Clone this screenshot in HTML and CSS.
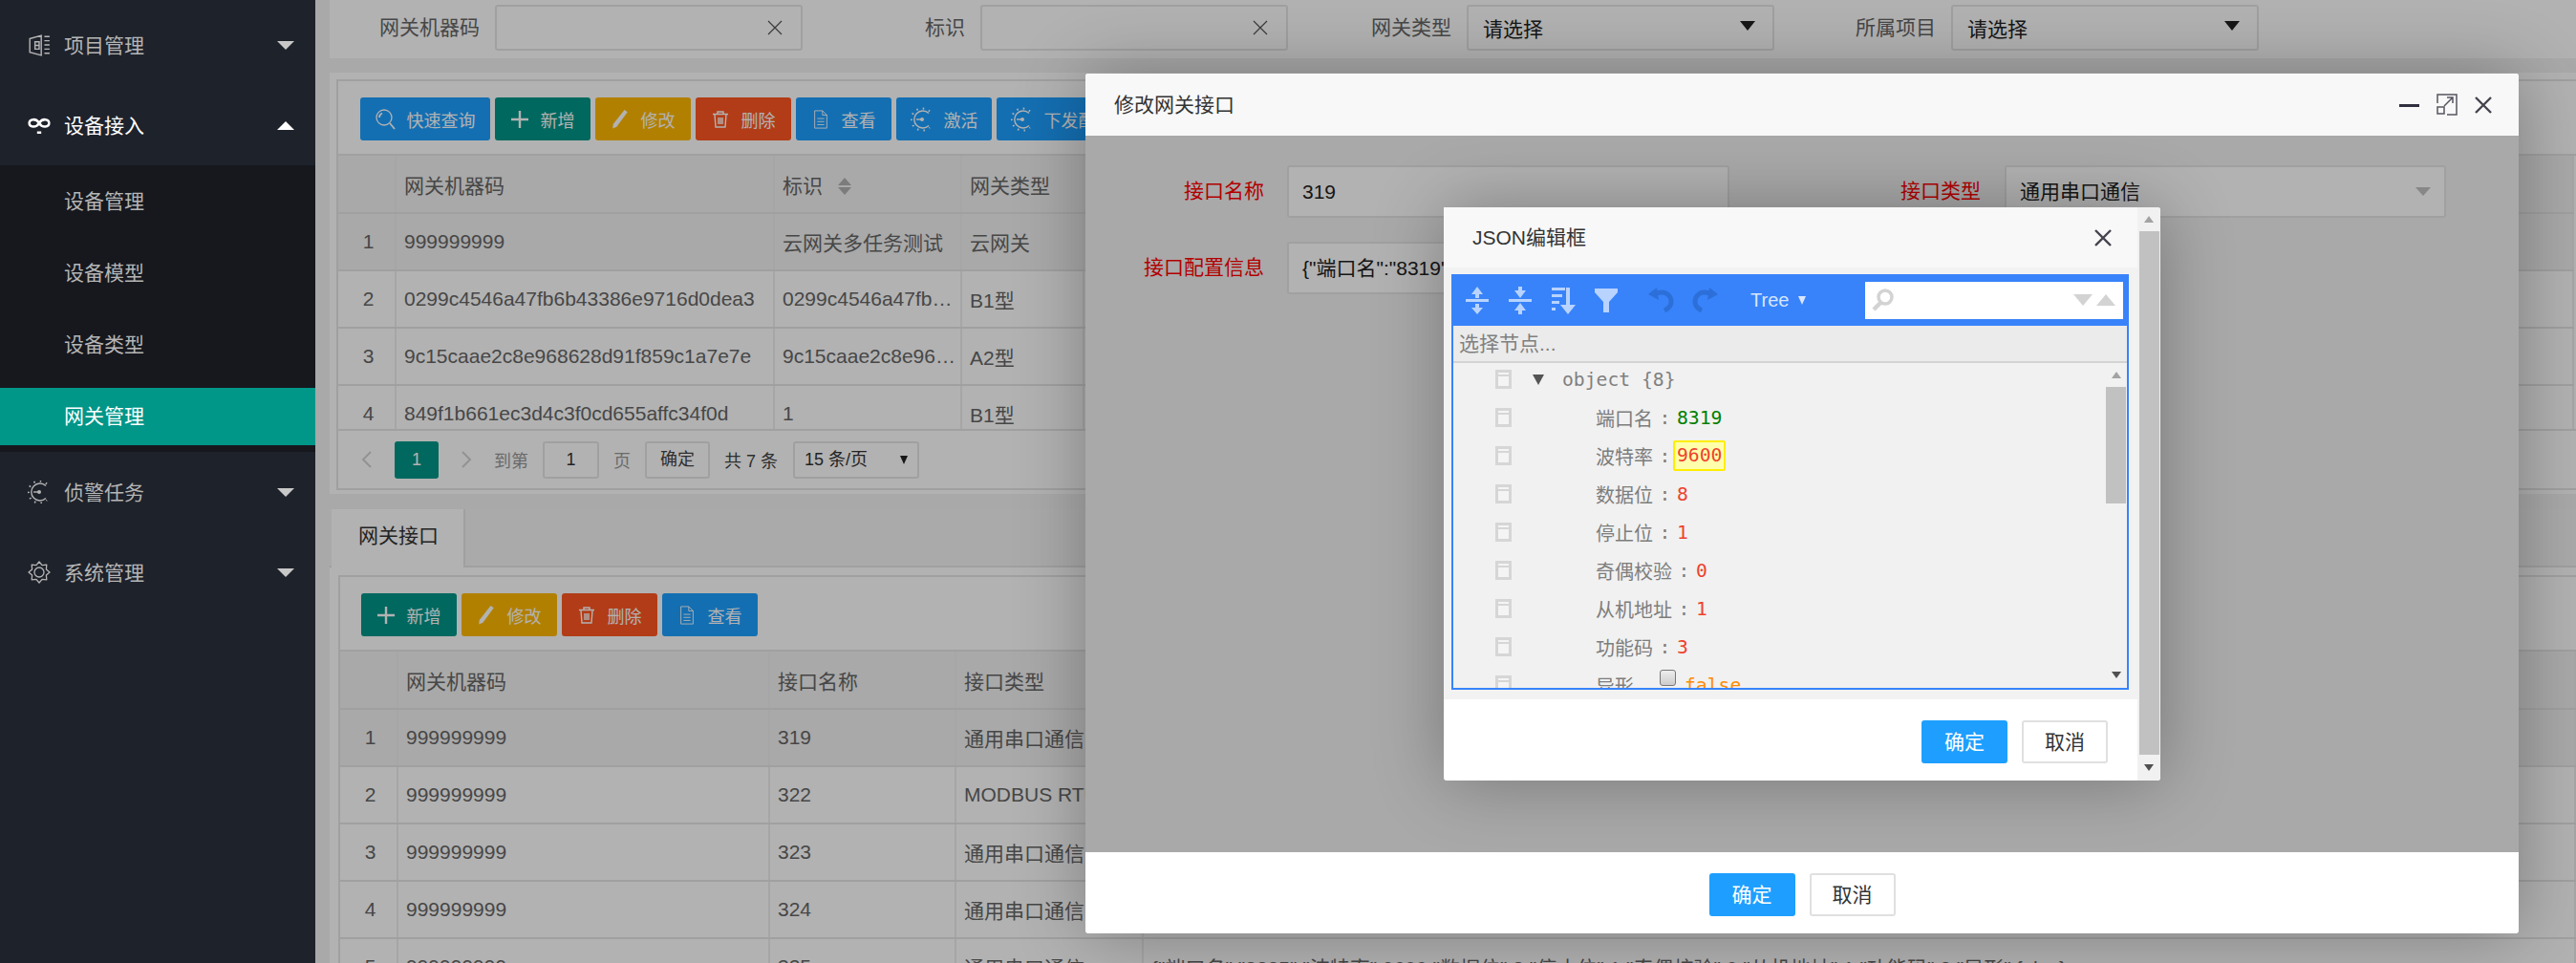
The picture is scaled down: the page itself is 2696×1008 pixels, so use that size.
FILE: index.html
```html
<!DOCTYPE html>
<html lang="zh-CN">
<head>
    <meta charset="UTF-8">
    <title>网关管理</title>
    <link rel="stylesheet" href="styles.css">
</head>
<body>
    <svg class="defs" width="0" height="0">
        <symbol id="i-task" viewBox="0 0 24 24">
            <path d="M19 5.5A9 9 0 1 0 19 18.500" fill="none" stroke="currentColor" stroke-width="1.4"/>
            <path d="M20 3.500A11.500 11.500 0 1 0 20 20.500" fill="none" stroke="currentColor" stroke-width="2" stroke-dasharray="1.5 5"/>
            <path d="M6 12h6" stroke="currentColor" stroke-width="1.4"/>
            <circle cx="12" cy="12" r="2" fill="currentColor"/>
        </symbol>
        <symbol id="i-search" viewBox="0 0 22 22">
            <circle cx="9" cy="9" r="8" fill="none" stroke="currentColor" stroke-width="1.3"/>
            <path d="M4 9a5 5 0 0 1 3-4.500M15 15l5 6" fill="none" stroke="currentColor" stroke-width="1.8"/>
        </symbol>
        <symbol id="i-plus" viewBox="0 0 18 18">
            <path d="M9 0v18M0 9h18" stroke="currentColor" stroke-width="2.4"/>
        </symbol>
        <symbol id="i-pencil" viewBox="0 0 18 22">
            <path d="M14 0l3.500 2.500L5 19.500 0.500 21.500 1 16.500z" fill="currentColor"/>
        </symbol>
        <symbol id="i-trash" viewBox="0 0 18 18">
            <path d="M1 3.500h16M6 3V1h6v2M3 4l1 13h10l1-13M7 7v7M9 7v7M11 7v7" fill="none" stroke="currentColor" stroke-width="1.4"/>
        </symbol>
        <symbol id="i-doc" viewBox="0 0 16 22">
            <path d="M1 1h9l5 5v15H1zM10 1v5h5M4 10h8M4 13.500h8M4 17h8" fill="none" stroke="currentColor" stroke-width="1"/>
        </symbol>
    </svg>

    <div class="layout">
        <aside class="sidebar">
            <div class="nav-item">
                <svg class="nav-icon" viewBox="0 0 22 22"><path d="M2 5l11-3v19L2 18zM7 8h4v7H7zM7 11.500h4M16 3h5M16 7h5M16 11h5M16 15h5M16 19h5" fill="none" stroke="currentColor" stroke-width="1.300"/></svg>
                <span class="nav-text">项目管理</span>
                <span class="arrow-down"></span>
            </div>
            <div class="nav-item open">
                <svg class="nav-icon" viewBox="0 0 22 22"><path d="M11 9C8 4 1.500 5 1.500 9S8 14 11 9 20.500 5 20.500 9 14 14 11 9M9 18h4" fill="none" stroke="currentColor" stroke-width="2.300"/></svg>
                <span class="nav-text">设备接入</span>
                <span class="arrow-up"></span>
            </div>
            <div class="subnav">
                <div class="sub-item">设备管理</div>
                <div class="sub-item">设备模型</div>
                <div class="sub-item">设备类型</div>
                <div class="sub-item"><span class="sub-active">网关管理</span></div>
            </div>
            <div class="nav-item">
                <svg class="nav-icon"><use href="#i-task"/></svg>
                <span class="nav-text">侦警任务</span>
                <span class="arrow-down"></span>
            </div>
            <div class="nav-item">
                <svg class="nav-icon" viewBox="0 0 24 24"><path d="M23 12L19.400 15.100 19.800 19.800 15.100 19.400 12 23 8.900 19.400 4.200 19.800 4.600 15.100 1 12 4.600 8.900 4.200 4.200 8.900 4.600 12 1 15.100 4.600 19.800 4.200 19.400 8.900z" fill="none" stroke="currentColor" stroke-width="1.300" stroke-linejoin="round"/><circle cx="12" cy="12" r="5" fill="none" stroke="currentColor" stroke-width="1.300"/></svg>
                <span class="nav-text">系统管理</span>
                <span class="arrow-down"></span>
            </div>
        </aside>

        <main class="main">
            <div class="filter-bar">
                <div class="filter-group">
                    <label>网关机器码</label>
                    <div class="field">
                        <svg class="clear-x" viewBox="0 0 16 16"><path d="M1 1l14 14M15 1L1 15"/></svg>
                    </div>
                </div>
                <div class="filter-group">
                    <label>标识</label>
                    <div class="field">
                        <svg class="clear-x" viewBox="0 0 16 16"><path d="M1 1l14 14M15 1L1 15"/></svg>
                    </div>
                </div>
                <div class="filter-group">
                    <label>网关类型</label>
                    <div class="field select">请选择<span class="caret-dark"></span></div>
                </div>
                <div class="filter-group">
                    <label>所属项目</label>
                    <div class="field select">请选择<span class="caret-dark"></span></div>
                </div>
            </div>

            <section class="panel panel-top">
                <div class="grid-box">
                    <div class="toolbar">
                        <div class="btn btn-blue btn-query"><svg class="btn-icon"><use href="#i-search"/></svg>快速查询</div>
                        <div class="btn btn-teal"><svg class="btn-icon"><use href="#i-plus"/></svg>新增</div>
                        <div class="btn btn-yellow"><svg class="btn-icon"><use href="#i-pencil"/></svg>修改</div>
                        <div class="btn btn-red"><svg class="btn-icon"><use href="#i-trash"/></svg>删除</div>
                        <div class="btn btn-blue"><svg class="btn-icon"><use href="#i-doc"/></svg>查看</div>
                        <div class="btn btn-blue btn-task"><svg class="btn-icon"><use href="#i-task"/></svg>激活</div>
                        <div class="btn btn-blue btn-task btn-query"><svg class="btn-icon"><use href="#i-task"/></svg>下发配置</div>
                    </div>
                    <div class="table-clip">
                        <table class="data-table">
                            <colgroup>
                                <col class="c-num"><col class="c-code"><col class="c-mark"><col class="c-type"><col>
                            </colgroup>
                            <tr class="head"><th></th><th>网关机器码</th><th>标识<span class="sort"></span></th><th>网关类型</th><th></th></tr>
                            <tr class="picked"><td>1</td><td>999999999</td><td>云网关多任务测试</td><td>云网关</td><td></td></tr>
                            <tr><td>2</td><td>0299c4546a47fb6b43386e9716d0dea3</td><td>0299c4546a47fb6b43386e9716d0dea3</td><td>B1型</td><td></td></tr>
                            <tr><td>3</td><td>9c15caae2c8e968628d91f859c1a7e7e</td><td>9c15caae2c8e968628d91f859c1a7e7e</td><td>A2型</td><td></td></tr>
                            <tr><td>4</td><td>849f1b661ec3d4c3f0cd655affc34f0d</td><td>1</td><td>B1型</td><td></td></tr>
                        </table>
                    </div>
                    <div class="pager">
                        <svg class="pager-arrow" viewBox="0 0 28 18"><path d="M18 1l-8 8 8 8"/></svg>
                        <span class="page-cur">1</span>
                        <svg class="pager-arrow" viewBox="0 0 28 18"><path d="M10 1l8 8-8 8"/></svg>
                        <span class="pager-text">到第</span>
                        <span class="page-input">1</span>
                        <span class="pager-text">页</span>
                        <span class="page-ok">确定</span>
                        <span class="pager-count">共 7 条</span>
                        <span class="page-size">15 条/页<span class="caret-small"></span></span>
                    </div>
                </div>
            </section>

            <section class="panel panel-bottom">
                <div class="tabs"><div class="tab">网关接口</div></div>
                <div class="grid-box">
                    <div class="toolbar">
                        <div class="btn btn-teal"><svg class="btn-icon"><use href="#i-plus"/></svg>新增</div>
                        <div class="btn btn-yellow"><svg class="btn-icon"><use href="#i-pencil"/></svg>修改</div>
                        <div class="btn btn-red"><svg class="btn-icon"><use href="#i-trash"/></svg>删除</div>
                        <div class="btn btn-blue"><svg class="btn-icon"><use href="#i-doc"/></svg>查看</div>
                    </div>
                    <table class="data-table port-table">
                        <colgroup>
                            <col class="c-num"><col class="c-code2"><col class="c-name"><col class="c-kind"><col>
                        </colgroup>
                        <tr class="head"><th></th><th>网关机器码</th><th>接口名称</th><th>接口类型</th><th>接口配置信息</th></tr>
                        <tr class="picked"><td>1</td><td>999999999</td><td>319</td><td>通用串口通信</td><td></td></tr>
                        <tr><td>2</td><td>999999999</td><td>322</td><td>MODBUS RTU</td><td></td></tr>
                        <tr><td>3</td><td>999999999</td><td>323</td><td>通用串口通信</td><td></td></tr>
                        <tr><td>4</td><td>999999999</td><td>324</td><td>通用串口通信</td><td></td></tr>
                        <tr><td>5</td><td>999999999</td><td>325</td><td>通用串口通信</td><td>{"端口名":"8325","波特率":9600,"数据位":8,"停止位":1,"奇偶校验":0,"从机地址":1,"功能码":3,"异形":false}</td></tr>
                    </table>
                </div>
            </section>
            <div class="shade"></div>
        </main>
    </div>

    <!-- 修改网关接口 -->
    <div class="modal modal-port">
        <div class="modal-head">
            <span class="modal-title">修改网关接口</span>
            <div class="modal-tools">
                <span class="tool-min"></span>
                <svg class="tool-max" viewBox="0 0 22 23"><path d="M1 10V1h20v21H11M8 13l9-9M11 4h6v6"/><rect x="1" y="14" width="7" height="7"/></svg>
                <svg class="tool-close" viewBox="0 0 18 18"><path d="M1 1l16 16M17 1L1 17"/></svg>
            </div>
        </div>
        <div class="modal-body">
            <div class="form-grid">
                <label class="req">接口名称</label>
                <div class="form-input">319</div>
                <label class="req">接口类型</label>
                <div class="form-input form-select">通用串口通信<span class="caret-gray"></span></div>
                <label class="req">接口配置信息</label>
                <div class="form-input">{"端口名":"8319","波特率":9600,"数据位":8,"停止位":1}</div>
            </div>
            <div class="shade"></div>
        </div>
        <div class="modal-foot">
            <span class="btn-ok">确定</span>
            <span class="btn-cancel">取消</span>
        </div>
    </div>

    <!-- JSON编辑框 -->
    <div class="modal modal-json">
        <div class="json-main">
            <div class="json-head">
                <span class="modal-title">JSON编辑框</span>
                <svg class="tool-close" viewBox="0 0 18 18"><path d="M1 1l16 16M17 1L1 17"/></svg>
            </div>
            <div class="json-body">
                <div class="editor">
                    <div class="editor-menu">
                        <svg class="m-icon m-expand" viewBox="0 0 24 29"><path d="M12 0l6 8h-4v4h-4V8H6zM0 13h24v3H0zM10 18h4v4h4l-6 7-6-7h4z"/></svg>
                        <svg class="m-icon m-collapse" viewBox="0 0 24 29"><path d="M10 0h4v4h4l-6 8-6-8h4zM0 13h24v3H0zM12 17l6 8h-4v4h-4v-4H6z"/></svg>
                        <svg class="m-icon m-sort" viewBox="0 0 25 29"><path d="M0 0h14v3H0zM0 7h11v3H0zM0 14h8v3H0zM0 21h4v3H0zM15 0h4v18h6l-8 10-8-10h6z" transform="translate(0 1)"/></svg>
                        <svg class="m-icon m-filter" viewBox="0 0 24 25"><path d="M0 0h24v4L15 14v11H9V14L0 4z"/></svg>
                        <svg class="m-icon m-undo" viewBox="0 0 27 26"><path d="M9 6c9-3 15 2 15 9 0 4-3 7-7 9" fill="none" stroke="currentColor" stroke-width="5"/><path d="M0 7l9-7 2 13z"/></svg>
                        <svg class="m-icon m-redo" viewBox="0 0 27 26"><path d="M18 6C9 3 3 8 3 15c0 4 3 7 7 9" fill="none" stroke="currentColor" stroke-width="5"/><path d="M27 7l-9-7-2 13z"/></svg>
                        <span class="m-mode">Tree<span class="m-caret"></span></span>
                        <div class="m-search">
                            <svg class="m-lens" viewBox="0 0 23 24"><circle cx="14" cy="9" r="7" fill="none" stroke="currentColor" stroke-width="3.500"/><path d="M9 15l-7 7" stroke="currentColor" stroke-width="4.500"/></svg>
                            <span class="m-down"></span>
                            <span class="m-up"></span>
                        </div>
                    </div>
                    <div class="editor-nav">选择节点...</div>
                    <div class="editor-tree">
                        <div class="tree-rows">
                            <div class="node"><span class="node-check"></span><span class="node-caret"></span><span class="node-root">object {8}</span></div>
                            <div class="node"><span class="node-check"></span><span class="node-key">端口名</span><span class="node-sep">:</span><span class="val-str">8319</span></div>
                            <div class="node"><span class="node-check"></span><span class="node-key">波特率</span><span class="node-sep">:</span><span class="val-num val-hit">9600</span></div>
                            <div class="node"><span class="node-check"></span><span class="node-key">数据位</span><span class="node-sep">:</span><span class="val-num">8</span></div>
                            <div class="node"><span class="node-check"></span><span class="node-key">停止位</span><span class="node-sep">:</span><span class="val-num">1</span></div>
                            <div class="node"><span class="node-check"></span><span class="node-key">奇偶校验</span><span class="node-sep">:</span><span class="val-num">0</span></div>
                            <div class="node"><span class="node-check"></span><span class="node-key">从机地址</span><span class="node-sep">:</span><span class="val-num">1</span></div>
                            <div class="node"><span class="node-check"></span><span class="node-key">功能码</span><span class="node-sep">:</span><span class="val-num">3</span></div>
                            <div class="node"><span class="node-check"></span><span class="node-key">异形</span><span class="node-sep node-sep-bool">:</span><span class="val-box"></span><span class="val-bool">false</span></div>
                        </div>
                        <div class="tree-scroll">
                            <span class="bar-up"></span>
                            <span class="bar-thumb"></span>
                            <span class="bar-down"></span>
                        </div>
                    </div>
                </div>
            </div>
            <div class="json-foot">
                <span class="btn-ok">确定</span>
                <span class="btn-cancel">取消</span>
            </div>
        </div>
        <div class="modal-scroll">
            <span class="bar-up"></span>
            <span class="bar-thumb"></span>
            <span class="bar-down"></span>
        </div>
    </div>
</body>
</html>
```

FILE: styles.css
```css
body {
    margin: 0;
    width: 2696px;
    height: 1008px;
    overflow: hidden;
    position: relative;
    font-family: "Liberation Sans", "Noto Sans CJK SC", sans-serif;
    font-size: 21px;
    color: #333;
}

.defs {
    position: absolute;
}

.layout {
    display: flex;
    height: 1008px;
}

/* Sidebar */
.sidebar {
    width: 330px;
    flex: none;
    padding-top: 5px;
    box-sizing: border-box;
    background-color: #1e222b;
    color: #b5b5b5;
}

.nav-item {
    height: 84px;
    display: flex;
    align-items: center;
    padding-left: 29px;
    padding-right: 22px;
}

.nav-item.open {
    color: #fff;
}

.nav-icon {
    width: 24px;
    height: 24px;
    margin-right: 14px;
}

.nav-text {
    flex: 1;
    margin-top: -3px;
}

.arrow-down {
    border-left: 9px solid transparent;
    border-right: 9px solid transparent;
    border-top: 9px solid #c8c8c8;
}

.arrow-up {
    border-left: 9px solid transparent;
    border-right: 9px solid transparent;
    border-bottom: 9px solid #fff;
}

.subnav {
    height: 300px;
    background-color: #16181e;
}

.sub-item {
    height: 75px;
    line-height: 75px;
    padding-left: 67px;
}

.sub-active {
    display: block;
    margin: 8px 0 0 -67px;
    padding-left: 67px;
    height: 60px;
    line-height: 60px;
    background-color: #009688;
    color: #fff;
}

/* Main */
.main {
    flex: 1;
    position: relative;
    overflow: hidden;
    padding-left: 15px;
    background-color: #f2f2f2;
}

.shade {
    position: absolute;
    top: 0;
    left: 0;
    right: 0;
    bottom: 0;
    background: rgba(0, 0, 0, 0.3);
    pointer-events: none;
}

.filter-bar {
    height: 61px;
    display: grid;
    grid-template-columns: 495px 508px 509px 507px;
    background-color: #fff;
}

.filter-group {
    display: flex;
    justify-content: flex-end;
    align-items: flex-start;
    gap: 16px;
}

.filter-group label {
    line-height: 58px;
    color: #666;
}

.field {
    width: 322px;
    height: 48px;
    margin-top: 5px;
    box-sizing: border-box;
    border: 2px solid #e6e6e6;
    border-radius: 3px;
    position: relative;
    display: flex;
    align-items: center;
    justify-content: flex-end;
    padding-right: 19px;
}

.field.select {
    justify-content: space-between;
    padding-left: 15px;
    padding-right: 18px;
    color: #222;
}

.clear-x {
    width: 16px;
    height: 16px;
    fill: none;
    stroke: #555;
    stroke-width: 1.2;
}

.caret-dark {
    border-left: 8px solid transparent;
    border-right: 8px solid transparent;
    border-top: 10px solid #222;
    margin-top: -4px;
}

.panel {
    background-color: #fff;
}

.panel-top {
    height: 441px;
    margin-top: 15px;
    padding: 7px 0 0 7px;
    box-sizing: border-box;
}

.panel-bottom {
    height: 480px;
    margin-top: 16px;
    padding-left: 2px;
}

.grid-box {
    border: 2px solid #e6e6e6;
    border-right: 0;
}

.tabs {
    height: 61px;
    box-sizing: border-box;
    margin-left: -2px;
    padding-left: 2px;
    margin-bottom: 8px;
    background-color: #f4f4f4;
    border-bottom: 2px solid #e6e6e6;
}

.tab {
    width: 140px;
    height: 61px;
    box-sizing: border-box;
    line-height: 56px;
    padding-left: 28px;
    background-color: #fff;
    border-right: 2px solid #e6e6e6;
}

.panel-bottom .grid-box {
    margin-left: 7px;
    border-bottom: 0;
}

.toolbar {
    height: 78px;
    box-sizing: border-box;
    padding: 17px 0 0 22px;
    display: flex;
    gap: 5px;
    border-bottom: 2px solid #e6e6e6;
}

.panel-top .toolbar {
    padding-left: 23px;
}

.btn {
    width: 100px;
    height: 45px;
    box-sizing: border-box;
    display: flex;
    align-items: center;
    justify-content: center;
    gap: 13px;
    border-radius: 3px;
    color: #fff;
    font-size: 18px;
}

.btn-query {
    width: 136px;
    gap: 11px;
}

.btn-icon {
    width: 18px;
    height: 20px;
    flex: none;
}

.btn-query .btn-icon {
    width: 22px;
    height: 22px;
}

.btn-task {
    gap: 11px;
}

.btn-task .btn-icon {
    width: 24px;
    height: 26px;
}

.btn-blue {
    background-color: #1e9fff;
}

.btn-teal {
    background-color: #009688;
}

.btn-yellow {
    background-color: #ffb800;
}

.btn-red {
    background-color: #ff5722;
}

.table-clip {
    height: 286px;
    overflow: hidden;
    border-bottom: 2px solid #e6e6e6;
}

.data-table {
    table-layout: fixed;
    width: 2340px;
    border-collapse: collapse;
    color: #666;
}

.data-table th,
.data-table td {
    height: 60px;
    padding: 0 4px 0 8px;
    box-sizing: border-box;
    border-right: 2px solid #eee;
    border-bottom: 2px solid #e6e6e6;
    font-weight: normal;
    text-align: left;
    white-space: nowrap;
    overflow: hidden;
    text-overflow: ellipsis;
}

.data-table td:first-child {
    text-align: center;
}

.data-table .head th,
.data-table .picked td {
    background-color: #f2f2f2;
}

.c-num {
    width: 60px;
}

.c-code {
    width: 396px;
}

.c-mark {
    width: 196px;
}

.c-type {
    width: 128px;
}

.c-code2 {
    width: 389px;
}

.c-name {
    width: 195px;
}

.c-kind {
    width: 196px;
}

.sort {
    display: inline-block;
    position: relative;
    width: 15px;
    height: 18px;
    margin-left: 16px;
    vertical-align: -2px;
}

.sort::before,
.sort::after {
    content: "";
    position: absolute;
    left: 0;
    border-left: 7.5px solid transparent;
    border-right: 7.5px solid transparent;
}

.sort::before {
    top: 0;
    border-bottom: 8px solid #b2b2b2;
}

.sort::after {
    bottom: 0;
    border-top: 8px solid #b2b2b2;
}

.pager {
    height: 60px;
    display: flex;
    align-items: center;
    gap: 15px;
    padding-left: 16px;
    font-size: 18px;
    color: #999;
}

.pager-arrow {
    width: 28px;
    height: 18px;
    fill: none;
    stroke: #d2d2d2;
    stroke-width: 2;
}

.page-cur {
    width: 46px;
    height: 39px;
    line-height: 39px;
    text-align: center;
    background-color: #009688;
    color: #fff;
    border-radius: 3px;
}

.page-input,
.page-ok,
.page-size {
    height: 39px;
    line-height: 35px;
    box-sizing: border-box;
    border: 2px solid #e6e6e6;
    border-radius: 3px;
    color: #333;
    text-align: center;
}

.page-input {
    width: 59px;
}

.page-ok {
    width: 68px;
    color: #444;
}

.pager-count {
    color: #444;
}

.page-size {
    width: 132px;
    margin-left: 1px;
    padding-left: 10px;
    text-align: left;
    display: flex;
    align-items: center;
    justify-content: space-between;
    padding-right: 10px;
}

.caret-small {
    border-left: 4px solid transparent;
    border-right: 4px solid transparent;
    border-top: 9px solid #222;
}

/* Modals */
.modal {
    position: absolute;
    background-color: #fff;
    border-radius: 3px;
    box-shadow: 1px 1px 75px rgba(0, 0, 0, 0.3);
}

.modal-title {
    margin-top: -3px;
}

.modal-port {
    left: 1136px;
    top: 77px;
    width: 1500px;
    height: 900px;
    display: flex;
    flex-direction: column;
}

.modal-head {
    height: 65px;
    flex: none;
    display: flex;
    align-items: center;
    justify-content: space-between;
    padding: 0 28px 0 30px;
    background-color: #f8f8f8;
    box-sizing: border-box;
    border-radius: 3px 3px 0 0;
}

.modal-tools {
    display: flex;
    align-items: center;
    gap: 18px;
}

.tool-min {
    width: 21px;
    height: 3px;
    background-color: #2f2f3f;
    margin-top: 2px;
}

.tool-max {
    width: 22px;
    height: 23px;
    fill: none;
    stroke: #55555f;
    stroke-width: 1.5;
}

.tool-close {
    width: 18px;
    height: 18px;
    fill: none;
    stroke: #44444f;
    stroke-width: 2.4;
}

.modal-body {
    flex: 1;
    position: relative;
    padding-top: 31px;
    background-color: #f2f2f2;
}

.form-grid {
    display: grid;
    grid-template-columns: 211px 463px 288px 462px;
    grid-auto-rows: 55px;
    row-gap: 25px;
}

.form-grid label {
    line-height: 53px;
    text-align: right;
    padding-right: 24px;
}

.form-grid label:nth-child(3) {
    padding-right: 25px;
}

.req {
    color: #ff0000;
}

.form-input {
    box-sizing: border-box;
    height: 55px;
    line-height: 51px;
    padding: 0 14px;
    background-color: #fff;
    border: 2px solid #e6e6e6;
    border-radius: 3px;
    overflow: hidden;
    white-space: nowrap;
    color: #222;
}

.form-select {
    display: flex;
    align-items: center;
    justify-content: space-between;
}

.caret-gray {
    border-left: 8px solid transparent;
    border-right: 8px solid transparent;
    border-top: 9px solid #c2c2c2;
}

.modal-foot {
    height: 85px;
    flex: none;
    display: flex;
    justify-content: center;
    gap: 15px;
    padding-top: 22px;
    box-sizing: border-box;
}

.btn-ok,
.btn-cancel {
    width: 90px;
    height: 45px;
    box-sizing: border-box;
    line-height: 41px;
    text-align: center;
    border: 2px solid #1e9fff;
    border-radius: 3px;
    background-color: #1e9fff;
    color: #fff;
}

.btn-cancel {
    border-color: #e0e0e0;
    background-color: #fff;
    color: #333;
}

/* JSON editor */
.modal-json {
    left: 1511px;
    top: 217px;
    width: 750px;
    height: 600px;
    display: flex;
}

.json-main {
    flex: 1;
    display: flex;
    flex-direction: column;
}

.json-head {
    height: 63px;
    flex: none;
    display: flex;
    align-items: center;
    justify-content: space-between;
    padding: 0 27px 0 30px;
    box-sizing: border-box;
    background-color: #f8f8f8;
}

.json-body {
    height: 452px;
    flex: none;
    box-sizing: border-box;
    padding: 7px 9px 10px 8px;
    background-color: #f2f2f2;
}

.editor {
    height: 435px;
    display: flex;
    flex-direction: column;
    box-sizing: border-box;
    border: 2px solid #3883fa;
    border-top: 0;
}

.editor-menu {
    height: 54px;
    flex: none;
    box-sizing: border-box;
    margin: 0 -2px;
    padding-left: 15px;
    display: flex;
    align-items: center;
    background-color: #3883fa;
    color: #b8d3ff;
    font-size: 20px;
}

.m-icon {
    flex: none;
    fill: currentColor;
}

.m-expand,
.m-collapse {
    width: 24px;
    height: 29px;
    margin-right: 21px;
}

.m-sort {
    width: 25px;
    height: 29px;
    margin-right: 20px;
}

.m-filter {
    width: 24px;
    height: 25px;
    margin-right: 32px;
}

.m-undo,
.m-redo {
    width: 27px;
    height: 26px;
    margin-right: 19px;
    color: #2c6fd8;
}

.m-redo {
    margin-right: 34px;
}

.m-mode {
    display: flex;
    align-items: center;
    width: 120px;
    color: #d8e6ff;
}

.m-caret {
    margin-left: 10px;
    border-left: 4px solid transparent;
    border-right: 4px solid transparent;
    border-top: 9px solid #d8e6ff;
}

.m-search {
    width: 270px;
    height: 39px;
    flex: none;
    box-sizing: border-box;
    padding: 0 8px 0 7px;
    display: flex;
    align-items: center;
    background-color: #fff;
}

.m-lens {
    width: 23px;
    height: 24px;
    color: #d3d3d3;
    margin-right: auto;
}

.m-down {
    border-left: 10px solid transparent;
    border-right: 10px solid transparent;
    border-top: 12px solid #d3d3d3;
    margin-right: 4px;
}

.m-up {
    border-left: 10px solid transparent;
    border-right: 10px solid transparent;
    border-bottom: 12px solid #d3d3d3;
}

.editor-nav {
    height: 39px;
    flex: none;
    box-sizing: border-box;
    line-height: 37px;
    padding-left: 6px;
    background-color: #ebebeb;
    border-bottom: 2px solid #d3d3d3;
    color: #808080;
}

.editor-tree {
    flex: 1;
    min-height: 0;
    display: flex;
    overflow: hidden;
    background-color: #f1f1f1;
}

.tree-rows {
    flex: 1;
    margin-top: -3px;
}

.node {
    height: 40px;
    display: flex;
    align-items: center;
    padding-left: 44px;
    font-family: "DejaVu Sans Mono", monospace;
    font-size: 19.7px;
}

.node-check {
    width: 17px;
    height: 20px;
    flex: none;
    box-sizing: border-box;
    border: 3px solid #d6d6d6;
    background: linear-gradient(#f4f4f4 2px, #d6d6d6 2px, #d6d6d6 4px, #f4f4f4 4px);
}

.node-caret {
    margin-left: 22px;
    margin-right: 19px;
    border-left: 6px solid transparent;
    border-right: 6px solid transparent;
    border-top: 11px solid #555;
}

.node-root {
    color: #808080;
}

.node-key {
    margin-left: 88px;
    font-family: "Liberation Serif", "Noto Sans CJK SC", serif;
    font-size: 20px;
    color: #7d7d7d;
}

.node-sep {
    width: 25px;
    text-align: center;
    color: #808080;
}

.node-sep-bool {
    width: 27px;
    margin-left: 20px;
    margin-right: -20px;
}

.val-str {
    color: #008000;
}

.val-num {
    color: #ee422e;
}

.val-hit {
    margin: 0 -4px;
    padding: 2px;
    line-height: 24px;
    border: 2px solid #ffee00;
    border-radius: 2px;
    background-color: #ffffab;
}

.val-box {
    width: 17px;
    height: 17px;
    box-sizing: border-box;
    margin: -16px 9px 0 0;
    border: 1px solid #777;
    border-radius: 3px;
    background: linear-gradient(#eee, #ccc);
}

.val-bool {
    color: #ff8c00;
}

.tree-scroll,
.modal-scroll {
    flex: none;
    display: flex;
    flex-direction: column;
    align-items: center;
    background-color: #f1f1f1;
}

.tree-scroll {
    width: 23px;
}

.modal-scroll {
    width: 24px;
    border-radius: 0 3px 3px 0;
}

.bar-thumb {
    background-color: #c1c1c1;
    width: 21px;
    flex: 1;
}

.bar-up {
    margin: 9px 0;
    border-left: 5.500px solid transparent;
    border-right: 5.500px solid transparent;
    border-bottom: 7px solid #a3a3a3;
}

.bar-down {
    margin: 10px 0;
    border-left: 5.500px solid transparent;
    border-right: 5.500px solid transparent;
    border-top: 7px solid #505050;
}

.tree-scroll .bar-thumb {
    flex: none;
    height: 122px;
    margin-bottom: auto;
}

.json-foot {
    flex: 1;
    display: flex;
    justify-content: flex-end;
    gap: 15px;
    padding: 22px 31px 0 0;
    box-sizing: border-box;
}
```
